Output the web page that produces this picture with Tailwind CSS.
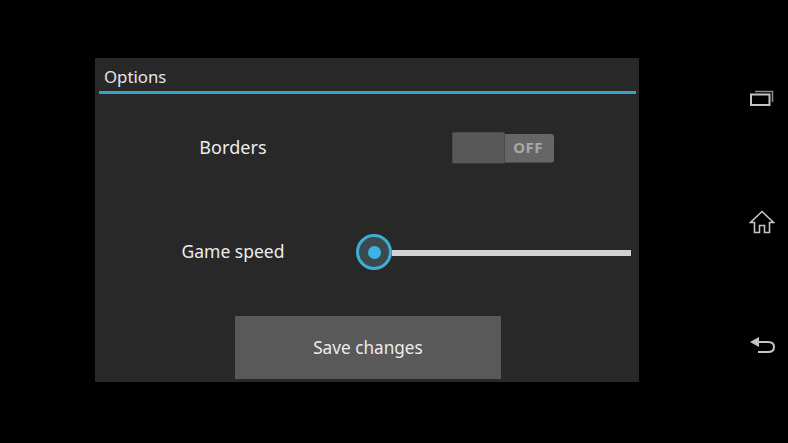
<!DOCTYPE html>
<html lang="en">
<head>
  <meta charset="UTF-8">
  <meta name="viewport" content="width=device-width, initial-scale=1.0">
  <title>Options</title>
  <script src="https://cdn.jsdelivr.net/npm/@tailwindcss/browser@4"></script>
</head>
<body class="bg-black w-[788px] h-[443px] overflow-hidden flex font-['Noto_Sans','Open_Sans',sans-serif]">
  <!-- Dialog area -->
  <div class="w-[718px] pl-[95px] pt-[58px]">
    <div class="w-[544px] h-[324px] bg-[#282828] flex flex-col">
      <div class="h-[33px] pl-[9px] pt-[8px] text-[16.8px] leading-[22px] text-[#e4e4e4]">Options</div>
      <div class="h-[3px] ml-[4px] mr-[3px] bg-[#3aa3c4] shrink-0"></div>

      <!-- Borders row -->
      <div class="flex items-center mt-[38px] h-[32px]">
        <div class="w-[276px] text-center text-[18px] tracking-[0.1px] leading-[24px] text-[#ececec] -mt-[2px]">Borders</div>
        <div class="ml-[80px] w-[103px] h-[32px] relative flex items-center justify-end">
          <div class="w-[60px] h-[29px] bg-[#666666] rounded-[3px] flex items-center justify-end pr-[11px] text-[15px] font-bold tracking-[0.5px] text-[#a8a8a8] border-b border-[#4a4a4a]">OFF</div>
          <div class="absolute left-[1px] top-0 w-[53px] h-[32px] bg-[#585858] rounded-[2px] border border-[#4c4c4c] border-b-[#3c3c3c]"></div>
        </div>
      </div>

      <!-- Game speed row -->
      <div class="flex items-center mt-[70px] h-[36px]">
        <div class="w-[276px] text-center text-[17.5px] leading-[24px] text-[#ececec] -mt-[2px]">Game speed</div>
        <div class="-ml-[15px] flex items-center">
          <div class="w-[36px] h-[36px] rounded-full border-[3px] border-[#3eaed4] bg-[#3c4a50] flex items-center justify-center shrink-0">
            <div class="w-[13px] h-[13px] rounded-full bg-[#3db2e4]"></div>
          </div>
          <div class="w-[239px] h-[6px] mt-[1px] bg-[#d2d2d2]"></div>
        </div>
      </div>

      <!-- Save -->
      <div class="mt-[46px] ml-[140px] w-[266px] h-[63px] pt-[1px] bg-[#595959] flex items-center justify-center text-[17.2px] text-[#ececec]">Save changes</div>
    </div>
  </div>

  <!-- Navigation bar -->
  <div class="w-[70px] h-full relative text-[#c8c8c8]">
    <div class="flex flex-col items-center pl-[18px]">
      <svg class="mt-[88px]" width="26" height="20" viewBox="0 0 26 20" fill="none" stroke="#c4c4c4">
        <rect x="2" y="6.5" width="18.5" height="10.5" stroke-width="2"/>
        <path d="M6 3.5H23.5V14" stroke-width="1.5" stroke="#8c8c8c"/>
      </svg>
      <svg class="mt-[102px]" width="26" height="24" viewBox="0 0 26 24" fill="none" stroke="#c4c4c4" stroke-width="1.6">
        <path d="M13 1.5L24.5 12.5H20.5V22.5H15.5V15.5H10.5V22.5H5.5V12.5H1.5Z" stroke-linejoin="miter"/>
      </svg>
      <svg class="mt-[101px]" width="26" height="20" viewBox="0 0 26 20" fill="none">
        <path d="M1 7L10 2V12Z" fill="#c4c4c4"/>
        <path d="M9 7H19C23 7 25 9 25 12C25 15 23 17 19 17H9" stroke="#c4c4c4" stroke-width="2"/>
      </svg>
    </div>
  </div>
</body>
</html>
